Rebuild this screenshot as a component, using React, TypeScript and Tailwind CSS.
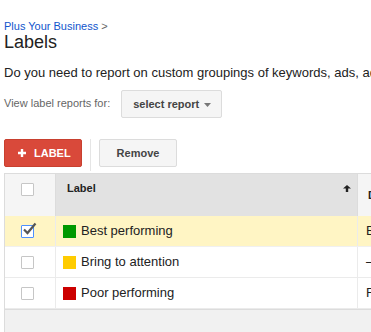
import React from "react";

function Checkbox({ checked = false }: { checked?: boolean }) {
  return (
    <div
      className={`relative w-[13px] h-[13px] rounded-[1px] bg-white border ${
        checked ? "border-[#4d90fe]" : "border-[#c6c6c6]"
      }`}
    >
      {checked && (
        <svg
          className="absolute left-[0px] top-[-4px]"
          width="15"
          height="15"
          viewBox="0 0 15 15"
        >
          <path d="M2 7.5 L5.5 11 L13.5 1.5" fill="none" stroke="#555" strokeWidth="2.2" />
        </svg>
      )}
    </div>
  );
}

type Row = { name: string; color: string; desc: string; selected?: boolean };

const rows: Row[] = [
  { name: "Best performing", color: "bg-[#009900]", desc: "Best keywords", selected: true },
  { name: "Bring to attention", color: "bg-[#ffcc00]", desc: "—" },
  { name: "Poor performing", color: "bg-[#cc0000]", desc: "For review" },
];

export default function App() {
  return (
    <div className="w-[371px] h-[332px] overflow-hidden bg-white text-[#222] font-['Liberation_Sans',Arial,sans-serif]">
      <div className="pl-[4px] pt-[20px]">
        <div className="text-[11px] leading-[12px] whitespace-nowrap">
          <span className="text-[#1155cc]">Plus Your Business</span>
          <span className="text-[#666]"> &gt;</span>
        </div>
        <h1 className="text-[18px] leading-[20px] text-[#222]">Labels</h1>
        <p className="mt-[13px] text-[13px] leading-[16px] whitespace-nowrap">
          Do you need to report on custom groupings of keywords, ads, ad groups, or campaigns?
        </p>
        <div className="mt-[9px] flex items-start">
          <span className="mt-[7px] text-[11px] leading-[13px] text-[#666] whitespace-nowrap">
            View label reports for:
          </span>
          <div className="ml-[11px] h-[28px] w-[101px] flex items-center pl-[11px] rounded-[2px] border border-[#dcdcdc] bg-[#f5f5f5] text-[11px] font-bold text-[#444] whitespace-nowrap">
            select report
            <svg className="ml-[5px] mt-[1px]" width="7" height="4" viewBox="0 0 7 4">
              <path d="M0 0 H7 L3.5 4 Z" fill="#777" />
            </svg>
          </div>
        </div>
        <div className="mt-[21px] flex items-start">
          <div className="h-[28px] w-[78px] flex items-center pl-[13px] rounded-[2px] bg-[#d9493a] border border-[#c8402f] text-white text-[11px] font-bold">
            <svg width="8" height="8" viewBox="0 0 8 8">
              <path d="M2.8 0 H5.2 V2.8 H8 V5.2 H5.2 V8 H2.8 V5.2 H0 V2.8 H2.8 Z" fill="#fff" />
            </svg>
            <span className="ml-[8px]">LABEL</span>
          </div>
          <div className="ml-[8px] w-[1px] h-[32px] bg-[#e5e5e5]" />
          <div className="ml-[8px] h-[28px] w-[78px] flex items-center justify-center rounded-[2px] border border-[#dcdcdc] bg-[#f5f5f5] text-[11px] font-bold text-[#444]">
            Remove
          </div>
        </div>
      </div>

      <div className="mt-[2px] ml-[4px] w-[420px] border-l border-t border-[#dcdcdc]">
        <div className="flex h-[42px]">
          <div className="w-[51px] shrink-0 bg-[#f5f5f5] border-r border-[#dcdcdc] pl-[16px] pt-[9px]">
            <Checkbox />
          </div>
          <div className="w-[302px] shrink-0 bg-[#e2e2e2] border-r border-[#dcdcdc] flex justify-between pl-[11px] pr-[6px] pt-[8px]">
            <span className="text-[11px] leading-[13px] font-bold text-[#222]">Label</span>
            <svg className="mt-[3px]" width="8" height="7" viewBox="0 0 8 7">
              <path d="M4 0 L8 3.6 H5.2 V7 H2.8 V3.6 H0 Z" fill="#222" />
            </svg>
          </div>
          <div className="flex-1 bg-[#f5f5f5] pl-[10px] pt-[8px]">
            <span className="text-[11px] leading-[13px] font-bold text-[#222] whitespace-nowrap">
              Description
            </span>
          </div>
        </div>
        {rows.map((r) => (
          <div
            key={r.name}
            className={`flex h-[31px] border-b ${
              r.selected ? "bg-[#fff5c4] border-[#f0f0f0]" : "bg-white border-[#ebebeb]"
            }`}
          >
            <div className="w-[51px] shrink-0 border-r border-[#ebebeb] pl-[16px] flex items-center">
              <Checkbox checked={r.selected} />
            </div>
            <div className="w-[302px] shrink-0 border-r border-[#ebebeb] pl-[7px] flex items-center">
              <div className={`w-[13px] h-[13px] ${r.color}`} />
              <span className="ml-[5px] text-[13px] leading-[16px] text-[#222] whitespace-nowrap">
                {r.name}
              </span>
            </div>
            <div className="flex-1 pl-[8px] flex items-center">
              <span className="text-[13px] leading-[16px] text-[#222] whitespace-nowrap">{r.desc}</span>
            </div>
          </div>
        ))}
        <div className="h-[40px] bg-[#f1f1f1] border-t border-[#dcdcdc]" />
      </div>
    </div>
  );
}
